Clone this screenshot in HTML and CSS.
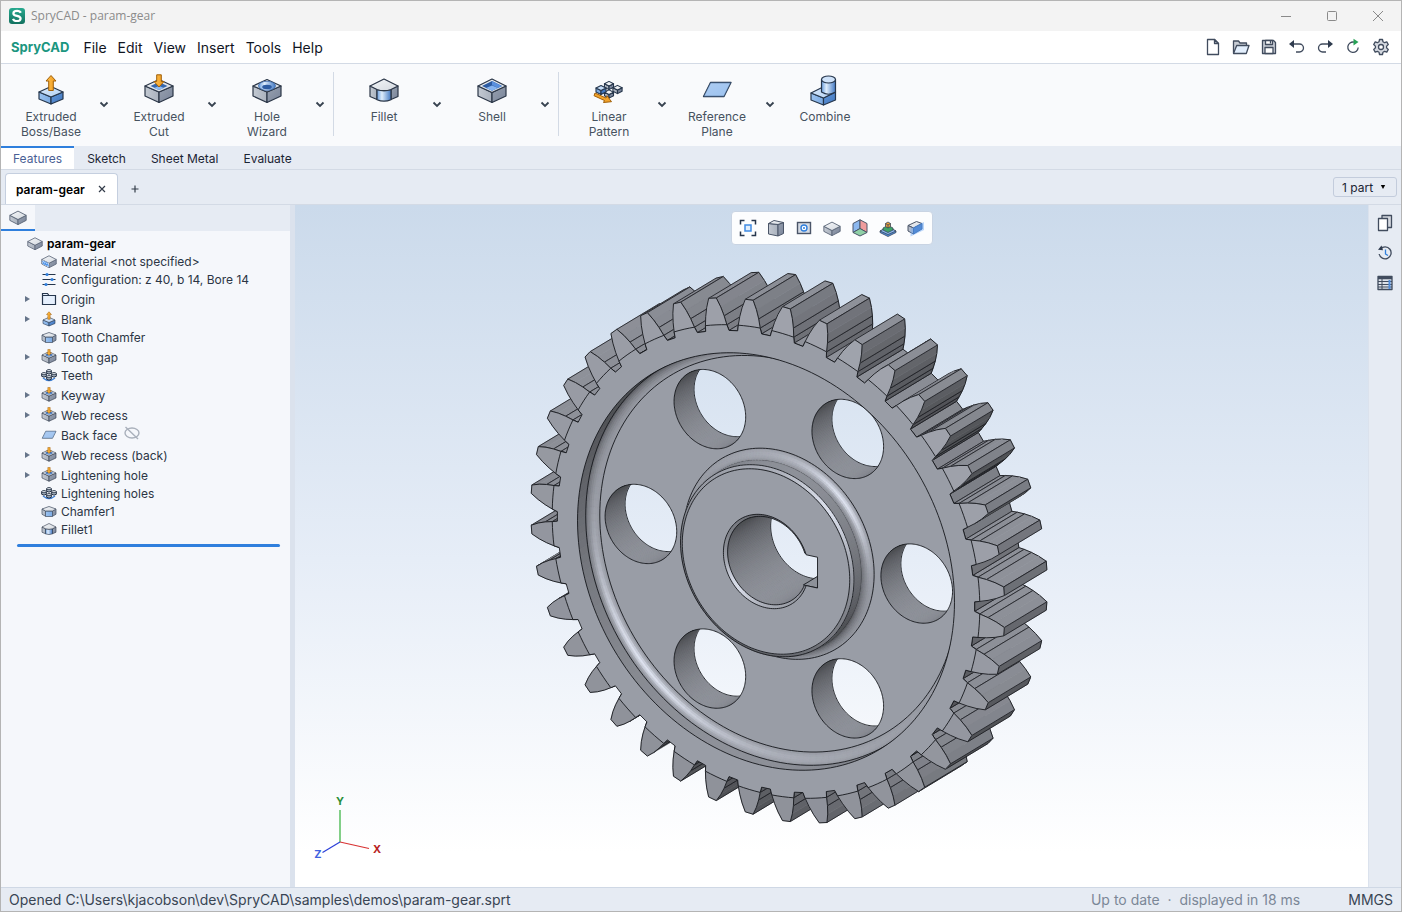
FILE: index.html
```html
<!DOCTYPE html>
<html lang="en">
<head>
<meta charset="utf-8">
<title>SpryCAD - param-gear</title>
<link rel="stylesheet" href="styles.css">
</head>
<body>
<svg class="defs" width="0" height="0" aria-hidden="true">
  <defs>
    <linearGradient id="gTop" x1="0" y1="0" x2="1" y2="1"><stop offset="0" stop-color="#f4f6f8"/><stop offset="1" stop-color="#d3d8df"/></linearGradient>
    <linearGradient id="gLeft" x1="0" y1="0" x2="1" y2="0"><stop offset="0" stop-color="#c3c9d2"/><stop offset="1" stop-color="#a9b1bd"/></linearGradient>
    <linearGradient id="gRight" x1="0" y1="0" x2="1" y2="1"><stop offset="0" stop-color="#98a1af"/><stop offset="1" stop-color="#79849a"/></linearGradient>
    <linearGradient id="bTop" x1="0" y1="0" x2="1" y2="1"><stop offset="0" stop-color="#d7e7fa"/><stop offset="1" stop-color="#b7d3f4"/></linearGradient>
    <linearGradient id="bLeft" x1="0" y1="0" x2="1" y2="0"><stop offset="0" stop-color="#9cc3f0"/><stop offset="1" stop-color="#7aa9e2"/></linearGradient>
    <linearGradient id="bRight" x1="0" y1="0" x2="1" y2="1"><stop offset="0" stop-color="#6397db"/><stop offset="1" stop-color="#4076bd"/></linearGradient>
    <linearGradient id="bCyl" x1="0" y1="0" x2="1" y2="0"><stop offset="0" stop-color="#6a9ddd"/><stop offset=".35" stop-color="#dfedfc"/><stop offset="1" stop-color="#4379c3"/></linearGradient>
    <linearGradient id="oArr" x1="0" y1="0" x2="1" y2="0"><stop offset="0" stop-color="#ffc04d"/><stop offset="1" stop-color="#ef9a1f"/></linearGradient>
    <linearGradient id="logoG" x1="0" y1="0" x2="0" y2="1"><stop offset="0" stop-color="#27a98f"/><stop offset="1" stop-color="#12715f"/></linearGradient>

    <symbol id="i-boss" viewBox="0 0 32 32">
      <g stroke="#26364c" stroke-width="1.2" stroke-linejoin="round">
        <path d="M4 18v7l12 5v-7z" fill="url(#bLeft)"/><path d="M28 18v7l-12 5v-7z" fill="url(#bRight)"/><path d="M16 12.500l12 5.500-12 5-12-5z" fill="url(#bTop)"/>
      </g>
      <path d="M16 1.500l5 5.500h-2.700v9.500h-4.600V7H11z" fill="url(#oArr)" stroke="#a05f08" stroke-width="1" stroke-linejoin="round"/>
    </symbol>
    <symbol id="i-cut" viewBox="0 0 32 32">
      <g stroke="#2b3647" stroke-width="1.200" stroke-linejoin="round">
        <path d="M2 12v10l14 6.500V18z" fill="url(#gLeft)"/><path d="M30 12v10l-14 6.500V18z" fill="url(#gRight)"/><path d="M16 5.500L30 12l-14 6-14-6z" fill="url(#gTop)"/>
      </g>
      <path d="M16 8l8.500 4-8.500 4-8.500-4z" fill="#3667ad"/><path d="M16 12l5 2-5 2-5-2z" fill="#8dbaf2"/>
      <path d="M13.700.8h4.600v6.700H21l-5 5.500-5-5.500h2.700z" fill="url(#oArr)" stroke="#a05f08" stroke-width="1" stroke-linejoin="round"/>
    </symbol>
    <symbol id="i-hole" viewBox="0 0 32 32">
      <g stroke="#2b3647" stroke-width="1.200" stroke-linejoin="round">
        <path d="M2 12v10l14 6.500V18z" fill="url(#gLeft)"/><path d="M30 12v10l-14 6.500V18z" fill="url(#gRight)"/><path d="M16 5.500L30 12l-14 6-14-6z" fill="url(#gTop)"/>
      </g>
      <ellipse cx="16" cy="11.800" rx="8.500" ry="4.500" fill="url(#bCyl)" stroke="#3b68ab" stroke-width=".8"/><ellipse cx="16" cy="13" rx="4.800" ry="2.200" fill="#2d5ca3"/>
    </symbol>
    <symbol id="i-fillet" viewBox="0 0 32 32">
      <g stroke="#2b3647" stroke-width="1.200" stroke-linejoin="round">
        <path d="M2 12v10.500l7 3V15z" fill="url(#gLeft)"/><path d="M30 12v10.500l-7 3V15z" fill="url(#gRight)"/>
        <path d="M9 15.500v10.200q7 3 14 0V15.500q-7 2.500-14 0z" fill="url(#bCyl)"/>
        <path d="M16 5l14 7-7 3.500q-7 2.400-14 0L2 12z" fill="url(#gTop)"/>
      </g>
    </symbol>
    <symbol id="i-chamfer" viewBox="0 0 32 32">
      <g stroke="#4a5568" stroke-width="1.500" stroke-linejoin="round">
        <path d="M2 12v10.500l7 4V16z" fill="url(#gLeft)"/><path d="M30 12v10.500l-7 4V16z" fill="url(#gRight)"/>
        <path d="M9 16h14v11H9z" fill="url(#bLeft)"/><path d="M16 7l14 5-7 4H9l-7-4z" fill="url(#gTop)"/>
      </g>
    </symbol>
    <symbol id="i-shell" viewBox="0 0 32 32">
      <g stroke="#2b3647" stroke-width="1.200" stroke-linejoin="round">
        <path d="M2 12v10l14 6.500V18.500z" fill="url(#gLeft)"/><path d="M30 12v10l-14 6.500V18.500z" fill="url(#gRight)"/><path d="M16 5L30 12l-14 6.500L2 12z" fill="url(#gTop)"/>
      </g>
      <path d="M16 7L26 12l-10 4.700L6 12z" fill="#2d5ca3"/><path d="M16 7L26 12l-4 2-6-3z" fill="#5a90de"/><path d="M16 11.500l6 2.500-6 2.700-6-2.700z" fill="#86b4f0"/>
    </symbol>
    <symbol id="i-cube" viewBox="0 0 12 12">
      <g stroke="#26364c" stroke-width="1.200" stroke-linejoin="round"><path d="M1 4v4l5 2.500v-4z" fill="#a9b1bd"/><path d="M11 4v4l-5 2.500v-4z" fill="#79849a"/><path d="M6 1.500L11 4 6 6.500 1 4z" fill="#eef1f4"/></g>
    </symbol>
    <symbol id="i-linear" viewBox="0 0 32 32">
      <use href="#i-cube" x="10.500" y="6" width="11" height="11"/><use href="#i-cube" x="19" y="10" width="11" height="11"/><use href="#i-cube" x="10.500" y="14.500" width="11" height="11"/>
      <g stroke="#26364c" stroke-width="1.100" stroke-linejoin="round"><path d="M3 14v4l5 2.500v-4z" fill="#7aa9e2"/><path d="M13 14v4l-5 2.500v-4z" fill="#4076bd"/><path d="M8 11.500l5 2.500-5 2.500L3 14z" fill="#c4dcf8"/></g>
      <path d="M2 19l11 5 1-2.300 4.500 6-8 .8 1-2L1 21.700z" fill="#f2a32b" stroke="#a05f08" stroke-width="1" stroke-linejoin="round"/>
    </symbol>
    <symbol id="i-plane" viewBox="0 0 32 32">
      <path d="M9.500 8.500H30L23 22.500H2.500z" fill="url(#bTop)" stroke="#26364c" stroke-width="1.300" stroke-linejoin="round"/><path d="M9.500 8.500H30L23 22.500H2.500z" fill="#7dade8" opacity=".45"/>
    </symbol>
    <symbol id="i-combine" viewBox="0 0 32 32">
      <g stroke="#26364c" stroke-width="1.200" stroke-linejoin="round">
        <path d="M2 19v7l12.500 5v-7z" fill="url(#bLeft)"/><path d="M26.500 18v8l-12 5v-7z" fill="url(#bRight)"/><path d="M14 13l12.500 5-12 6L2 19z" fill="url(#bTop)"/>
        <path d="M12.500 5.500v12.500q7 4.500 14 0V5.500z" fill="url(#bCyl)"/><ellipse cx="19.500" cy="5.500" rx="7" ry="3.500" fill="#cfe2f9"/>
      </g>
    </symbol>
    <symbol id="i-block" viewBox="0 0 32 32">
      <g stroke="#5a6577" stroke-width="1.600" stroke-linejoin="round">
        <path d="M1.500 13v9L16 29.500v-9z" fill="url(#gLeft)"/><path d="M30.500 13v9L16 29.500v-9z" fill="url(#gRight)"/><path d="M16 5.500L30.500 13 16 20.500 1.500 13z" fill="url(#gTop)"/>
      </g>
    </symbol>
    <symbol id="i-material" viewBox="0 0 32 32">
      <use href="#i-block" width="32" height="32"/><path d="M3 14v8l13 7v-8z" fill="#dcebfd"/><path d="M3 16l4 7m0-7l4 10m0-8l4 9M3 21l12 3" stroke="#4c93ea" stroke-width="2" fill="none"/>
    </symbol>
    <symbol id="i-config" viewBox="0 0 16 16">
      <path d="M1.500 3.500h13M1.500 8.500h13M1.500 13.500h13" stroke="#26364c" stroke-width="1.200"/><circle cx="6" cy="3.500" r="1.600" fill="#2f7fdd"/><circle cx="11" cy="8.500" r="1.600" fill="#2f7fdd"/><circle cx="5" cy="13.500" r="1.600" fill="#2f7fdd"/>
    </symbol>
    <symbol id="i-folder" viewBox="0 0 16 16">
      <path d="M1.500 13.500v-11h5l1.500 2h6.500v9z" fill="#e6f0fd" stroke="#26364c" stroke-width="1.200"/><path d="M1.500 4.500H8" stroke="#26364c"/>
    </symbol>
    <symbol id="i-drum" viewBox="0 0 6 6">
      <path d="M.7 1.700v2.600q2.300 1.600 4.600 0V1.700" fill="#b5bfcc" stroke="#1d2b3e" stroke-width="1"/><ellipse cx="3" cy="1.700" rx="2.300" ry="1.100" fill="#eef2f6" stroke="#1d2b3e" stroke-width=".9"/>
    </symbol>
    <symbol id="i-circ" viewBox="0 0 16 16">
      <path d="M2 11q6 5 12 0" stroke="#3d7fd4" stroke-width="1.300" fill="none"/>
      <use href="#i-drum" x="5" y="2" width="6" height="6"/><use href="#i-drum" x="0" y="5" width="6" height="6"/><use href="#i-drum" x="10" y="5" width="6" height="6"/><use href="#i-drum" x="5" y="8" width="6" height="6"/>
    </symbol>
  </defs>
</svg>

<div class="window">
  <header class="titlebar">
    <svg class="logo" viewBox="0 0 16 16"><rect width="16" height="16" rx="3" fill="url(#logoG)"/><path d="M11.800 4.800C11.200 3.400 9.800 2.900 8.100 2.900 6 2.900 4.400 3.900 4.400 5.400c0 3.300 7.200 1.700 7.200 5 0 1.600-1.600 2.600-3.700 2.600-1.900 0-3.300-.7-3.900-2.200" fill="none" stroke="#fff" stroke-width="2.200"/></svg>
    <h1 class="title">SpryCAD - param-gear</h1>
    <div class="wincontrols">
      <button class="winbtn" aria-label="Minimize"><svg viewBox="0 0 12 12"><path d="M1 6.500h10"/></svg></button>
      <button class="winbtn" aria-label="Maximize"><svg viewBox="0 0 12 12"><rect x="1.500" y="1.500" width="9" height="9" rx="1"/></svg></button>
      <button class="winbtn" aria-label="Close"><svg viewBox="0 0 12 12"><path d="M1 1l10 10M11 1L1 11"/></svg></button>
    </div>
  </header>

  <nav class="menubar">
    <span class="brand">SpryCAD</span>
    <button class="menu">File</button><button class="menu">Edit</button><button class="menu">View</button><button class="menu">Insert</button><button class="menu">Tools</button><button class="menu">Help</button>
    <div class="quick">
      <button class="quickbtn" aria-label="New"><svg viewBox="0 0 18 18"><path d="M3.500 1.500h7l4 4v11h-11z" fill="#fff"/><path d="M10.500 1.500v4h4z" fill="#c7ccd4"/></svg></button>
      <button class="quickbtn" aria-label="Open"><svg viewBox="0 0 18 18"><path d="M1.500 15V3h5l1.500 2h6.500v2.500" fill="#c7ccd4"/><path d="M1.500 15.500l3.200-8H17l-2.700 8z" fill="#e3effd"/></svg></button>
      <button class="quickbtn" aria-label="Save"><svg viewBox="0 0 18 18"><path d="M2.500 2.500h11l2 2v11h-13z" fill="#c7ccd4"/><path d="M5.500 2.500v4h7v-4z" fill="#fff"/><path d="M5 15.500v-6h8v6z" fill="#fff"/><path d="M10.500 3v2.500"/></svg></button>
      <button class="quickbtn" aria-label="Undo"><svg viewBox="0 0 18 18"><path d="M4 6h7.500a3.700 3.700 0 0 1 0 8H8" fill="none"/><path d="M1 6l5-4v8z" fill="#2f3b4e" stroke="none"/></svg></button>
      <button class="quickbtn" aria-label="Redo"><svg viewBox="0 0 18 18"><path d="M14 6H6.500a3.700 3.700 0 0 0 0 8H10" fill="none"/><path d="M17 6l-5-4v8z" fill="#2f3b4e" stroke="none"/></svg></button>
      <button class="quickbtn" aria-label="Rebuild"><svg viewBox="0 0 18 18"><path d="M10 4.100A5.200 5.200 0 1 0 14.200 9.500" fill="none"/><path d="M9.500.8l5 3.200-5 3.600z" fill="#27a256" stroke="none"/></svg></button>
      <button class="quickbtn" aria-label="Settings"><svg viewBox="0 0 18 18"><path d="M7.500 1.500h3l.5 2.300 1.600.9 2.200-.8 1.500 2.600-1.700 1.600v1.800l1.700 1.600-1.500 2.600-2.200-.8-1.600.9-.5 2.300h-3L7 14.200l-1.600-.9-2.200.8-1.500-2.600 1.700-1.600V8.100L1.700 6.500l1.500-2.600 2.200.8L7 3.800z" fill="#d5d9e0"/><circle cx="9" cy="9" r="2.500" fill="#fff"/></svg></button>
    </div>
  </nav>

  <div class="ribbon" role="toolbar" aria-label="Features">
    <button class="tool"><svg class="toolicon"><use href="#i-boss"/></svg><span>Extruded<br>Boss/Base</span></button>
    <button class="drop" aria-label="Extruded Boss options"><svg viewBox="0 0 10 10"><path d="M1.500 3.500L5 7l3.500-3.500"/></svg></button>
    <button class="tool"><svg class="toolicon"><use href="#i-cut"/></svg><span>Extruded<br>Cut</span></button>
    <button class="drop" aria-label="Extruded Cut options"><svg viewBox="0 0 10 10"><path d="M1.500 3.500L5 7l3.500-3.500"/></svg></button>
    <button class="tool"><svg class="toolicon"><use href="#i-hole"/></svg><span>Hole<br>Wizard</span></button>
    <button class="drop" aria-label="Hole options"><svg viewBox="0 0 10 10"><path d="M1.500 3.500L5 7l3.500-3.500"/></svg></button>
    <div class="sep"></div>
    <button class="tool"><svg class="toolicon"><use href="#i-fillet"/></svg><span>Fillet</span></button>
    <button class="drop" aria-label="Fillet options"><svg viewBox="0 0 10 10"><path d="M1.500 3.500L5 7l3.500-3.500"/></svg></button>
    <button class="tool"><svg class="toolicon"><use href="#i-shell"/></svg><span>Shell</span></button>
    <button class="drop" aria-label="Shell options"><svg viewBox="0 0 10 10"><path d="M1.500 3.500L5 7l3.500-3.500"/></svg></button>
    <div class="sep"></div>
    <button class="tool"><svg class="toolicon"><use href="#i-linear"/></svg><span>Linear<br>Pattern</span></button>
    <button class="drop" aria-label="Pattern options"><svg viewBox="0 0 10 10"><path d="M1.500 3.500L5 7l3.500-3.500"/></svg></button>
    <button class="tool"><svg class="toolicon"><use href="#i-plane"/></svg><span>Reference<br>Plane</span></button>
    <button class="drop" aria-label="Reference options"><svg viewBox="0 0 10 10"><path d="M1.500 3.500L5 7l3.500-3.500"/></svg></button>
    <button class="tool"><svg class="toolicon"><use href="#i-combine"/></svg><span>Combine</span></button>
  </div>

  <div class="tabs" role="tablist">
    <button class="tab active" role="tab" aria-selected="true">Features</button>
    <button class="tab" role="tab">Sketch</button>
    <button class="tab" role="tab">Sheet Metal</button>
    <button class="tab" role="tab">Evaluate</button>
  </div>

  <div class="docs">
    <div class="doc"><span>param-gear</span><button class="docclose" aria-label="Close param-gear"><svg viewBox="0 0 8 8"><path d="M1 1l6 6M7 1L1 7"/></svg></button></div>
    <button class="docadd" aria-label="New document"><svg viewBox="0 0 8 8"><path d="M4 .5v7M.5 4h7"/></svg></button>
    <div class="parts"><select class="partselect" aria-label="Parts"><option>1 part</option></select><svg class="caret" viewBox="0 0 6 6"><path d="M.8 1h4.400L3 5z"/></svg></div>
  </div>

  <main class="main">
    <aside class="side">
      <div class="sidetabs"><button class="sidetab" aria-label="Feature tree"><svg class="i18"><use href="#i-block"/></svg></button></div>
      <ul class="tree">
        <li class="node root"><svg class="i16"><use href="#i-block"/></svg><span>param-gear</span></li>
        <li class="node"><svg class="i16"><use href="#i-material"/></svg><span>Material &lt;not specified&gt;</span></li>
        <li class="node"><svg class="i16"><use href="#i-config"/></svg><span>Configuration: z 40, b 14, Bore 14</span></li>
        <li class="node tall open"><svg class="i16"><use href="#i-folder"/></svg><span>Origin</span></li>
        <li class="node tall open"><svg class="i16"><use href="#i-boss"/></svg><span>Blank</span></li>
        <li class="node"><svg class="i16"><use href="#i-chamfer"/></svg><span>Tooth Chamfer</span></li>
        <li class="node tall open"><svg class="i16"><use href="#i-cut"/></svg><span>Tooth gap</span></li>
        <li class="node"><svg class="i16"><use href="#i-circ"/></svg><span>Teeth</span></li>
        <li class="node tall open"><svg class="i16"><use href="#i-cut"/></svg><span>Keyway</span></li>
        <li class="node tall open"><svg class="i16"><use href="#i-cut"/></svg><span>Web recess</span></li>
        <li class="node tall"><svg class="i16"><use href="#i-plane"/></svg><span>Back face</span><svg class="eye" viewBox="0 0 16 16"><ellipse cx="8" cy="8" rx="7" ry="5"/><path d="M1.500 2l12.500 12"/></svg></li>
        <li class="node tall open"><svg class="i16"><use href="#i-cut"/></svg><span>Web recess (back)</span></li>
        <li class="node tall open"><svg class="i16"><use href="#i-cut"/></svg><span>Lightening hole</span></li>
        <li class="node"><svg class="i16"><use href="#i-circ"/></svg><span>Lightening holes</span></li>
        <li class="node"><svg class="i16"><use href="#i-chamfer"/></svg><span>Chamfer1</span></li>
        <li class="node"><svg class="i16"><use href="#i-fillet"/></svg><span>Fillet1</span></li>
      </ul>
      <div class="rollback"></div>
    </aside>
    <div class="splitter"></div>
    <section class="viewport">
      <canvas class="model" id="model" width="540" height="570"></canvas>
      <div class="viewbar" role="toolbar" aria-label="View">
        <button class="viewbtn" aria-label="Zoom to fit"><svg viewBox="0 0 18 18"><path d="M1.500 5.500v-4h4M12.500 1.500h4v4M16.500 12.500v4h-4M5.500 16.500h-4v-4" fill="none" stroke="#26364c" stroke-width="1.500"/><rect x="6" y="6" width="6" height="6" fill="#e2effd" stroke="#3f8ae2" stroke-width="1.500"/></svg></button>
        <button class="viewbtn" aria-label="View cube"><svg viewBox="0 0 18 18"><g stroke="#4a5568" stroke-linejoin="round"><path d="M1.500 4.500l9.500 1V17l-9.500-2z" fill="url(#gLeft)"/><path d="M11 5.500l5.500-2v11L11 17z" fill="url(#gRight)"/><path d="M1.500 4.500L7 1.500l9.500 2-5.500 2z" fill="url(#gTop)"/></g></svg></button>
        <button class="viewbtn" aria-label="Normal to"><svg viewBox="0 0 18 18"><rect x="2.500" y="3.500" width="13" height="11" fill="#d5dbe4" stroke="#4a5568" stroke-width="1.400"/><circle cx="9" cy="9" r="3" fill="#fff" stroke="#2f7fdd" stroke-width="1.400"/><circle cx="9" cy="9" r="1" fill="#2f7fdd"/></svg></button>
        <button class="viewbtn" aria-label="Display style"><svg><use href="#i-block"/></svg></button>
        <button class="viewbtn" aria-label="Planes"><svg viewBox="0 0 18 18"><g stroke="#4a5568" stroke-linejoin="round"><path d="M2 4.500L9 .8v8.700l-7 4z" fill="#8cb8ee"/><path d="M9 .8l7 3.700v9l-7-4z" fill="#f09c9c"/><path d="M9 9.500l7 4-7 3.500-7-3.500z" fill="#8fd0a6"/></g></svg></button>
        <button class="viewbtn" aria-label="Appearance"><svg viewBox="0 0 18 18"><g stroke="#3a475a" stroke-width=".8" stroke-linejoin="round"><path d="M1 12l8-3.500 8 3.500v1.500l-8 4-8-4z" fill="#4e8cdc"/><path d="M1 12l8 3.500 8-3.500-8-4z" fill="#8cb8ee"/><path d="M4 9l5-2.500L14 9v2l-5 2.500L4 11z" fill="#3fa468"/><path d="M6.500 4.500L9 3l2.500 1.500v3L9 9 6.500 7.500z" fill="#efa137"/><path d="M6.500 4.500L9 6l2.500-1.500M9 6v3" fill="none"/></g></svg></button>
        <button class="viewbtn" aria-label="Section view"><svg viewBox="0 0 18 18"><g stroke-linejoin="round"><path d="M1 6.500L9.500 2.500l5.500 2-8.500 4.500z" fill="#e4e7eb" stroke="#4a5568"/><path d="M1 6.500L6.500 9v6L1 12z" fill="#b5bcc8" stroke="#4a5568"/><path d="M6.500 9L15 4.500V10l-8.500 5z" fill="#4076bd" stroke="#2b5c9f"/><path d="M3.500 9.500L17 3v8L3.500 17.500z" fill="#6aa6f4" opacity=".45"/></g></svg></button>
      </div>
      <svg class="triad" viewBox="0 0 80 70">
        <path d="M31 15v32" stroke="#5abf60" stroke-width="1.500"/><path d="M31 47l29 6.500" stroke="#d83232" stroke-width="1.200"/><path d="M31 47L13.500 57.500" stroke="#2b3fd8" stroke-width="1.200"/>
        <text x="31" y="10" fill="#2a8f3a">Y</text><text x="68" y="58" fill="#b82222">X</text><text x="9" y="63" fill="#3f62e0">Z</text>
      </svg>
    </section>
    <aside class="rail">
      <button class="railbtn" aria-label="Copies"><svg viewBox="0 0 18 18"><path d="M6 1.500h9.500v12H6z" fill="#d5d9e0"/><path d="M2.500 4.500h9v12h-9z" fill="#fff"/></svg></button>
      <button class="railbtn" aria-label="History"><svg viewBox="0 0 18 18"><path d="M4.500 5A6 6 0 1 1 3.200 10" fill="none"/><path d="M2 5.800L5.500 1.500 7 6.200z" fill="#2f3b4e" stroke="none"/><path d="M9.500 5.500V10l2.500 1.500" fill="none" stroke="#2f7fdd"/></svg></button>
      <button class="railbtn" aria-label="Properties"><svg viewBox="0 0 18 18"><path d="M2 2.500h14v13H2z" fill="#dde2ea"/><path d="M2 4h14" stroke-width="2.500"/><path d="M2 7.500h14M2 10.500h14M2 13h14M6 5v10.500" stroke-width="1"/><path d="M13.500 6v9" stroke="#4e8cdc" stroke-width="2"/></svg></button>
    </aside>
  </main>

  <footer class="status">
    <span>Opened C:\Users\kjacobson\dev\SpryCAD\samples\demos\param-gear.sprt</span>
    <span class="muted">Up to date &nbsp;·&nbsp; displayed in 18 ms</span>
    <span class="units">MMGS</span>
  </footer>
</div>
<script src="gear.js"></script>
</body>
</html>
```
FILE: styles.css
```css
* { box-sizing: border-box; }
body { margin: 0; font-family: Inter, "Liberation Sans", sans-serif; font-size: 12px; color: #1b2433; }
button, select { font: inherit; color: inherit; background: none; border: 0; padding: 0; margin: 0; }
svg { display: block; }
.defs { position: absolute; }
.window { display: flex; flex-direction: column; height: 100vh; border: 1px solid #b4b4b4; background: #e6ebf3; overflow: hidden; }

.titlebar { display: flex; align-items: center; height: 30px; flex: none; background: #f3f3f3; padding-left: 8px; gap: 6px; }
.logo { width: 16px; height: 16px; }
.title { margin: 0; flex: 1; font: 12px/16px "Open Sans", "Noto Sans", sans-serif; color: #8b8b8b; }
.wincontrols { display: flex; align-self: stretch; }
.winbtn { width: 46px; display: grid; place-items: center; }
.winbtn svg { width: 12px; height: 12px; fill: none; stroke: #8a8a8a; stroke-width: 1; }

.menubar { display: flex; align-items: center; gap: 1px; height: 33px; flex: none; background: #fff; border-bottom: 1px solid #d3dae5; padding: 0 6px 0 10px; }
.brand { font-weight: 700; font-size: 13px; color: #1b9680; margin-right: 8px; }
.menu { font-size: 14px; padding: 0 5px; color: #10151f; }
.quick { display: flex; margin-left: auto; }
.quickbtn { width: 28px; height: 28px; display: grid; place-items: center; }
.quickbtn svg, .railbtn svg { width: 18px; height: 18px; stroke: #414c5e; stroke-width: 1.3; stroke-linejoin: round; }

.ribbon { display: flex; align-items: flex-start; height: 82px; flex: none; background: #f9fafc; padding: 8px 7px 0; }
.tool { display: flex; flex-direction: column; align-items: center; gap: 3px; width: 86px; color: #47525f; line-height: 15px; padding-top: 2px; }
.toolicon { width: 32px; height: 32px; }
.drop { width: 20px; height: 64px; margin-right: 2px; display: grid; place-items: center; }
.drop svg { width: 10px; height: 10px; fill: none; stroke: #37424f; stroke-width: 1.8; }
.sep { width: 1px; height: 64px; background: #d3dae5; margin: 0 7px 0 1px; }

.tabs { display: flex; gap: 1px; height: 24px; flex: none; border-bottom: 1px solid #d3dae5; }
.tab { padding: 2px 12px 0; border-top: 0; font-size: 12px; }
.tab.active { background: #fff; color: #4a5f95; border-top: 2px solid #2f7fdd; padding-top: 0; }

.docs { display: flex; align-items: flex-end; height: 35px; flex: none; padding: 0 4px; border-bottom: 1px solid #d3dae5; }
.doc { display: flex; align-items: center; gap: 13px; height: 31px; padding: 0 11px 0 10px; background: #fff; border: 1px solid #c5cfdf; border-bottom: 0; border-radius: 4px 4px 0 0; font-weight: 600; color: #000; }
.docclose svg, .docadd svg { width: 8px; height: 8px; fill: none; stroke: #333c49; stroke-width: 1.2; }
.docadd { height: 31px; padding: 0 13px; }
.parts { position: relative; margin-left: auto; margin-bottom: 7px; }
.partselect { display: block; appearance: none; width: 64px; height: 20px; border: 1px solid #c3ccdc; border-radius: 3px; padding: 0 0 0 8px; }
.caret { position: absolute; right: 11px; top: 7px; width: 6px; height: 6px; pointer-events: none; }

.main { display: flex; flex: 1; min-height: 0; }
.side { width: 289px; flex: none; background: #f5f7fb; }
.sidetabs { height: 26px; background: #e6ebf3; }
.sidetab { width: 34px; height: 26px; display: grid; place-items: center; background: #f5f7fb; border-bottom: 2px solid #2f7fdd; }
.i18 { width: 18px; height: 18px; }
.i16 { width: 16px; height: 16px; flex: none; }
.tree { list-style: none; margin: 0; padding: 3px 0 0; color: #2b3544; }
.node { position: relative; display: flex; align-items: center; gap: 4px; height: 18px; padding-left: 40px; white-space: nowrap; }
.root { padding-left: 26px; font-weight: 600; color: #000; }
.tall { height: 20px; padding-top: 2px; }
.open::before { content: ""; position: absolute; left: 24px; top: 8px; border: 3px solid transparent; border-left: 5px solid #66758a; border-right: 0; }
.eye { width: 16px; height: 16px; margin: -4px 0 0 3px; fill: none; stroke: #a9b0bb; stroke-width: 1.4; }
.rollback { height: 3px; border-radius: 2px; background: #2f7fdd; margin: 6px 10px 0 16px; }
.splitter { width: 5px; flex: none; background: #dbe2ed; }
.viewport { position: relative; flex: 1; min-width: 0; overflow: hidden; background: linear-gradient(#cbdaeb, #e6edf7 52%, #fff 95%); }
.model { position: absolute; left: 225px; top: 57px; }
.viewbar { position: relative; display: flex; width: max-content; margin: 6px auto 0; padding: 2px; background: #fcfdfe; border: 1px solid #c9d4e3; border-radius: 4px; }
.viewbtn { width: 28px; height: 28px; display: grid; place-items: center; }
.viewbtn svg { width: 18px; height: 18px; }
.triad { position: absolute; left: 14px; bottom: 22px; width: 80px; height: 70px; fill: none; }
.triad text { font-weight: 700; font-size: 11px; text-anchor: middle; }
.rail { width: 33px; flex: none; padding: 3px 0 0 1px; background: #e6ebf3; border-left: 1px solid #dbe2ed; }
.railbtn { width: 30px; height: 30px; display: grid; place-items: center; }

.status { display: flex; align-items: center; height: 24px; flex: none; border-top: 1px solid #cfd8e5; padding: 0 8px; font-size: 14px; color: #394554; }
.muted { margin-left: auto; color: #7b8797; }
.units { margin-left: 48px; }
```
FILE: gear.js
```js
// Shaded drawing of the spur gear: orthographic projection, painter's order.
const ctx = document.getElementById('model').getContext('2d');
const TAU = Math.PI * 2, RAD = Math.PI / 180;
const CX = 246, CY = 299.5;
const DEPTH = 90, WEB = 25, WEB_BACK = 64;
const EYE = [0.478, 0.360, 0.801];
const LINE = '#15171c';

// z grows away from the viewer, starting at the front face.
const P = (x, y, z) => [CX + x * 0.8587 + z * 0.5125, CY + x * 0.1856 - y * 0.9328 - z * 0.3096];
const polar = (r, a, z) => P(r * Math.cos(a), r * Math.sin(a), z);

function shade(nx, ny, nz) {
  const m = Math.hypot(nx, ny, nz); nx /= m; ny /= m; nz /= m;
  const d = nx * 0.16 + ny * 0.66 + nz * 0.8;
  const s = Math.max(0, nx * 0.47 + ny * 0.43 + nz * 0.77);
  const v = Math.max(82, 98 + 72 * d) + 62 * Math.pow(s, 18);
  return `rgb(${Math.round(v * 0.965)},${Math.round(v * 0.985)},${Math.round(v * 1.04)})`;
}
const FACE = '#999da6';

function trace(pts) {
  ctx.beginPath();
  pts.forEach((p, i) => i ? ctx.lineTo(p[0], p[1]) : ctx.moveTo(p[0], p[1]));
}
function poly(pts, fill) {
  trace(pts); ctx.closePath(); ctx.fillStyle = fill; ctx.fill();
  ctx.strokeStyle = fill; ctx.lineWidth = 0.7; ctx.stroke();
}
function line(pts, w = 0.9) { trace(pts); ctx.strokeStyle = LINE; ctx.lineWidth = w; ctx.stroke(); }
function circle(r, z, x = 0, y = 0) {
  const pts = [];
  for (let i = 0; i <= 180; i++) { const a = i / 180 * TAU; pts.push(P(x + r * Math.cos(a), y + r * Math.sin(a), z)); }
  return pts;
}
// Surface of revolution between (r0,z0) and (r1,z1); the normal is given by radial and axial parts.
function band(r0, z0, r1, z1, nr, nz, x = 0, y = 0) {
  const N = 180;
  for (let i = 0; i < N; i++) {
    const a = i / N * TAU, b = (i + 1) / N * TAU, m = (a + b) / 2;
    const q = (r, t, z) => P(x + r * Math.cos(t), y + r * Math.sin(t), z);
    const n = [nr * Math.cos(m), nr * Math.sin(m), nz];
    if (n[0] * EYE[0] + n[1] * EYE[1] + n[2] * EYE[2] <= 0) continue;
    poly([q(r0, a, z0), q(r0, b, z0), q(r1, b, z1), q(r1, a, z1)], shade(...n));
  }
}
function clipTo(pts, fn) { ctx.save(); trace(pts); ctx.closePath(); ctx.clip(); fn(); ctx.restore(); }

// Tooth flank: radius and half angle in degrees.
const flank = [[243, 3.3], [249, 2.95], [258, 2.45], [267, 1.8], [276, 0.95]];
const lip = r => Math.max(0, (r - 249) / 27 * 3.5);
function toothProfile(c) {
  const right = flank.map(([r, h]) => [r, c - h * RAD]);
  const left = flank.map(([r, h]) => [r, c + h * RAD]).reverse();
  return right.concat(left);
}

const quads = [];
for (let i = 0; i < 40; i++) {
  const c = (4.5 + 9 * i) * RAD;
  const pr = toothProfile(c);
  pr.push([243, c + (9 - 3.3) * RAD]);
  for (let k = 0; k < pr.length - 1; k++) {
    const [r0, a0] = pr[k], [r1, a1] = pr[k + 1];
    const x0 = r0 * Math.cos(a0), y0 = r0 * Math.sin(a0), x1 = r1 * Math.cos(a1), y1 = r1 * Math.sin(a1);
    const nx = y1 - y0, ny = x0 - x1;
    if (nx * EYE[0] + ny * EYE[1] <= 0) continue;
    const z0 = lip(r0), z1 = lip(r1);
    quads.push({
      d: (x0 + x1) / 2 * EYE[0] + (y0 + y1) / 2 * EYE[1],
      p: [P(x0, y0, z0), P(x1, y1, z1), P(x1, y1, DEPTH - z1), P(x0, y0, DEPTH - z0)],
      n: [nx, ny, 0], k
    });
  }
}
quads.sort((a, b) => a.d - b.d);
// Profile points whose long edge is smooth and carries no line.
const soft = [3, 6];
for (const q of quads) {
  poly(q.p, shade(...q.n));
  if (!soft.includes(q.k)) line([q.p[0], q.p[3]], 0.8);
  if (!soft.includes(q.k + 1)) line([q.p[1], q.p[2]], 0.8);
  line([q.p[2], q.p[3]]);
  line([q.p[0], q.p[1]]);
}

// Front faces of the teeth, slightly conical, then the rim.
for (let i = 0; i < 40; i++) {
  const c = (4.5 + 9 * i) * RAD;
  const pts = toothProfile(c).map(([r, a]) => polar(r, a, lip(r)));
  poly(pts, shade(Math.cos(c) * 0.15, Math.sin(c) * 0.15, 1));
  line(pts);
}
const body = [];
for (let i = 0; i < 40; i++) {
  const c = (4.5 + 9 * i) * RAD;
  for (const t of [-3.3, -2.95, -1.5, 0, 1.5, 2.95, 3.3]) body.push(polar(Math.abs(t) > 3 ? 243 : 249, c + t * RAD, 0));
}
body.push(body[0]);
trace(body); ctx.fillStyle = FACE; ctx.fill();
line(body);

// Recess with its floor, fillets, holes and hub.
const RIM = 219.5, FLOOR = 208.5, HUB = 101, HUB_FACE = 97.5, HUB_BASE = 111, HOLE = 41.7, HOLE_PITCH = 160.6;
clipTo(circle(RIM, 0), () => {
  poly(circle(RIM, WEB), FACE);
  band(RIM, 0, RIM, 16, -1, 0);
  for (let i = 0; i < 8; i++) {
    const t0 = i / 8 * Math.PI / 2, t1 = (i + 1) / 8 * Math.PI / 2, tm = (t0 + t1) / 2;
    const f = t => [RIM - (RIM - FLOOR) * (1 - Math.cos(t)), 16 + (WEB - 16) * Math.sin(t)];
    band(...f(t0), ...f(t1), -Math.cos(tm), Math.sin(tm));
  }
  line(circle(RIM, 16));
  poly(circle(FLOOR, WEB), FACE);
  line(circle(FLOOR, WEB));
  for (let h = 0; h < 6; h++) {
    const x = HOLE_PITCH * Math.cos(h * 60 * RAD), y = HOLE_PITCH * Math.sin(h * 60 * RAD);
    clipTo(circle(HOLE, WEB, x, y), () => {
      band(HOLE, WEB, HOLE, WEB_BACK, -1, 0, x, y);
      ctx.globalCompositeOperation = 'destination-out';
      poly(circle(HOLE, WEB_BACK, x, y), '#000');
      ctx.globalCompositeOperation = 'source-over';
      line(circle(HOLE, WEB_BACK, x, y));
    });
    line(circle(HOLE, WEB, x, y));
  }
  for (let i = 0; i < 8; i++) {
    const t0 = i / 8 * Math.PI / 2, t1 = (i + 1) / 8 * Math.PI / 2, tm = (t0 + t1) / 2;
    const f = t => [HUB_BASE - (HUB_BASE - HUB) * Math.sin(t), WEB - (WEB - 16) * (1 - Math.cos(t))];
    band(...f(t0), ...f(t1), Math.sin(tm), Math.cos(tm));
  }
  line(circle(HUB_BASE, WEB));
  line(circle(HUB, 16));
  band(HUB, 16, HUB, 2.5, 1, 0);
  poly(circle(HUB, 2.5), FACE);
  band(HUB, 2.5, HUB_FACE, 0, 0.7, 0.7);
  line(circle(HUB, 2.5));
  poly(circle(HUB_FACE, 0), FACE);
  line(circle(HUB_FACE, 0));
});
line(circle(RIM, 0));

// Bore with keyway.
const KEY_X = 60, KEY_Y = 16.5;
function boreOutline(r, z) {
  const a0 = Math.asin(KEY_Y / r), pts = [];
  for (let i = 0; i <= 120; i++) pts.push(polar(r, a0 + (TAU - 2 * a0) * i / 120, z));
  pts.push(P(KEY_X, -KEY_Y, z), P(KEY_X, KEY_Y, z), pts[0]);
  return pts;
}
clipTo(boreOutline(49.6, 0), () => {
  band(49.6, 0, 46.5, 3, -0.7, 0.7);
  clipTo(boreOutline(46.5, 3), () => {
    band(46.5, 3, 46.5, DEPTH, -1, 0);
    ctx.globalCompositeOperation = 'destination-out';
    poly(boreOutline(46.5, DEPTH - 3), '#000');
    ctx.globalCompositeOperation = 'source-over';
    line(boreOutline(46.5, DEPTH - 3));
  });
  line(boreOutline(46.5, 3));
  const kx = Math.sqrt(46.5 * 46.5 - KEY_Y * KEY_Y);
  const wall = [P(kx, -KEY_Y, 0), P(KEY_X, -KEY_Y, 0), P(KEY_X, -KEY_Y, DEPTH), P(kx, -KEY_Y, DEPTH), P(kx, -KEY_Y, 0)];
  poly(wall, '#8d9199');
  line(wall);
});
line(boreOutline(49.6, 0));
```
